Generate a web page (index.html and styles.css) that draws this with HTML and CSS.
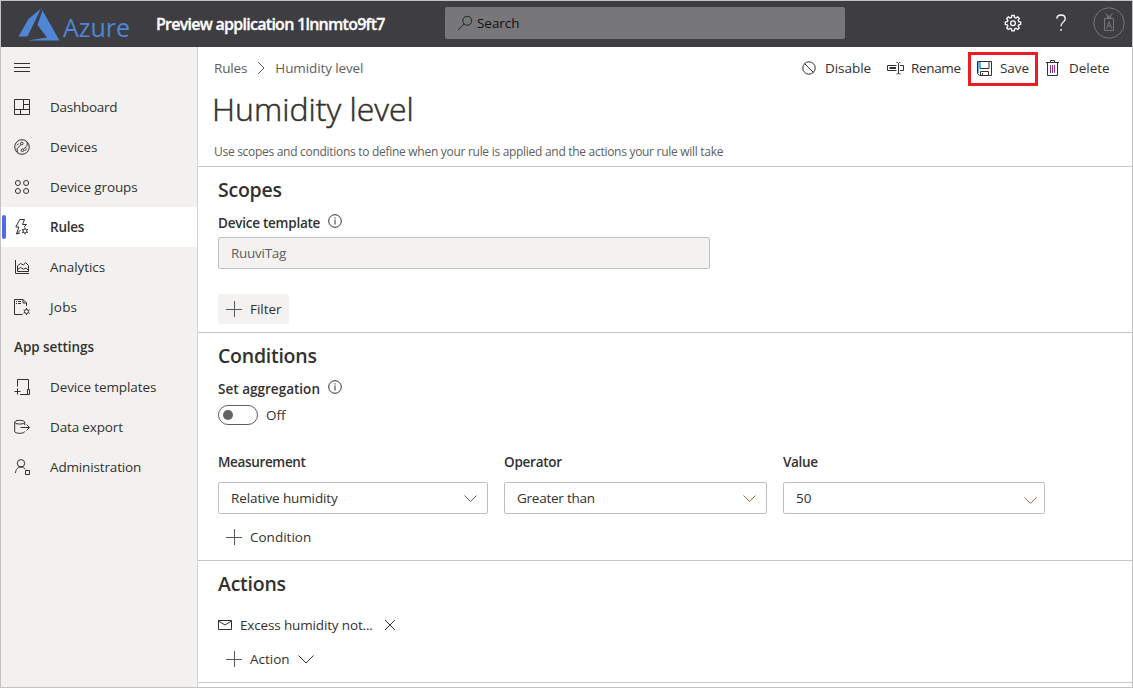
FILE: index.html
```html
<!DOCTYPE html>
<html lang="en">
<head>
<meta charset="utf-8">
<title>Humidity level</title>
<link rel="stylesheet" href="styles.css">
</head>
<body>
<div class="app">
  <header class="topbar">
    <svg class="logo" width="42" height="33" viewBox="0 0 42 33"><path d="M23 .5 10.500 11 .5 28.500H9.500ZM24.500 2.500 41.500 32.500H9.500L29 29.500 19.500 17Z"/></svg>
    <span class="brand">Azure</span>
    <span class="app-name">Preview application 1lnnmto9ft7</span>
    <div class="search">
      <svg class="icon search-icon" width="16" height="16" viewBox="0 0 16 16"><circle cx="10.200" cy="5.800" r="4.500"/><path d="M7 9 1 15"/></svg>
      <span class="t-search">Search</span>
    </div>
    <div class="top-actions">
      <svg class="icon white gear" width="18" height="18" viewBox="0 0 18 18"><path d="M7.800 1.500h2.400l.4 2 1.300.6 1.800-1.200 1.600 1.600-1.200 1.800.6 1.300 2 .4v2.400l-2 .4-.6 1.300 1.200 1.800-1.600 1.600-1.800-1.200-1.300.6-.4 2H7.800l-.4-2-1.300-.6-1.800 1.200-1.600-1.600 1.200-1.800-.6-1.300-2-.4V8l2-.4.6-1.300-1.200-1.800 1.600-1.600 1.800 1.200 1.300-.6Z"/><circle cx="9" cy="9.200" r="2.400"/></svg>
      <svg class="icon white help" width="12" height="18" viewBox="0 0 12 18"><path d="M1.800 4.600C2 2.300 3.700 1 6 1s4.200 1.400 4.200 3.700C10.200 8 6 8.300 6 12.200"/><path d="M6 15v2"/></svg>
      <svg class="avatar" width="32" height="32" viewBox="0 0 32 32"><circle cx="16" cy="16" r="15.200"/><path d="M11.500 11.500h9v12h-9zM12.500 6l3.500 5 3.500-5M13.500 21.500l2.500-7 2.500 7M14.500 19h3M14.500 11.500V9h3v2.500"/></svg>
    </div>
  </header>
  <div class="body">
    <nav class="sidebar">
      <div class="nav-item"><svg class="icon" width="16" height="16" viewBox="0 0 16 16"><path d="M0 4.500h16M0 8.500h16M0 12.500h16"/></svg></div>
      <div class="nav-item"><svg class="icon" width="16" height="16" viewBox="0 0 16 16"><path d="M.5.500h15v15H.5ZM9.500.500v10M.5 10.500h15M9.500 5.500h6M6.500 10.500v5"/></svg><span class="n1">Dashboard</span></div>
      <div class="nav-item"><svg class="icon" width="16" height="16" viewBox="0 0 16 16"><circle cx="8" cy="8" r="7.300"/><circle cx="7.800" cy="4.500" r="1.300"/><circle cx="8.500" cy="11.300" r="1.300"/><path d="M7 5.700 3.200 9.500V13M9.500 10.300 13.200 6.500V3M4.800 4.500 3 6.300M10.500 12 13 9.500"/></svg><span class="n2">Devices</span></div>
      <div class="nav-item"><svg class="icon" width="16" height="16" viewBox="0 0 16 16"><circle cx="3.900" cy="4" r="2.500"/><circle cx="12.100" cy="4" r="2.500"/><circle cx="3.900" cy="12" r="2.500"/><circle cx="12.100" cy="12" r="2.500"/></svg><span class="n3">Device groups</span></div>
      <div class="nav-item active"><svg class="icon" width="16" height="16" viewBox="0 0 16 16"><path d="M8.500 5.500 10.500.5H5.800L1.800 8h3L2.500 15l4-4M8.500 5.500h4L10 8M2.500 15l3.500-1"/><circle cx="11" cy="12" r="2"/><path d="M11 8.500V10M11 14v1.500M8 10.300l1.300.7M12.700 13l1.300.7M8 13.700l1.300-.7M12.700 11l1.300-.7"/></svg><span class="n4">Rules</span></div>
      <div class="nav-item"><svg class="icon" width="16" height="16" viewBox="0 0 16 16"><path d="M1.500 1v13.500H15M3.500 12.500V6.800l3-2.300 3 1.500 2-2.500 3 3v6ZM3.500 10.500l3-2 3 1.700 2.500-1.200 2.500 2.500"/></svg><span class="n5">Analytics</span></div>
      <div class="nav-item"><svg class="icon" width="16" height="16" viewBox="0 0 16 16"><path d="M8.500 15.500H.5V.5h8.500l3.500 3.500v3M9 .5V4h3.500M2 2.500h1M4 2.500h3M2 4.500h1M4 4.500h3"/><circle cx="12.500" cy="12.500" r="2"/><path d="M12.500 9v1.500M12.500 14.500V16M9.500 10.800l1.300.7M14.200 13.500l1.500.8M9.500 14.200l1.300-.7M14.200 11.500l1.500-.8"/></svg><span class="n6">Jobs</span></div>
      <div class="nav-item heading"><span class="n7">App settings</span></div>
      <div class="nav-item"><svg class="icon" width="16" height="16" viewBox="0 0 16 16"><path d="M3.500 7.500v-7h11v10M6 15.500h9.500v-5h-2v5M3.500 9.500v6M.5 12.500h6"/></svg><span class="n8">Device templates</span></div>
      <div class="nav-item"><svg class="icon" width="16" height="16" viewBox="0 0 16 16"><ellipse cx="5.700" cy="3.200" rx="5" ry="1.900"/><path d="M.7 3.200v9.300c0 1 2.200 1.800 5 1.800s5-.8 5-1.800M10.700 3.200V6M6.500 8.500h9M12.500 5.500l3 3-3 3"/></svg><span class="n9">Data export</span></div>
      <div class="nav-item"><svg class="icon" width="16" height="16" viewBox="0 0 16 16"><circle cx="7" cy="4.300" r="3.700"/><path d="M1.500 14c.2-3.500 2.200-6 5.500-6 2 0 3.500.9 4.300 2.300M11.500 11.500h4v4h-4Z"/></svg><span class="n10">Administration</span></div>
    </nav>
    <main class="main">
      <div class="page-head">
        <div class="command-row">
          <div class="crumbs"><span class="c1">Rules</span><svg class="icon grey" width="8" height="14" viewBox="0 0 8 14"><path d="M1 1l6 6-6 6"/></svg><span class="c2">Humidity level</span></div>
          <div class="commands">
            <div class="cmd disable"><svg class="icon" width="14" height="14" viewBox="0 0 14 14"><circle cx="7" cy="7" r="6.200"/><path d="M2.500 2.500l9 9"/></svg><span class="k1">Disable</span></div>
            <div class="cmd rename"><svg class="icon" width="17" height="14" viewBox="0 0 17 14"><path d="M9.500 9.500h-9v-5h9M13 4.500h3.500v5H13M9.500 1.500h1l1 1 1-1h1M11.500 2.500v10M9.500 13h1l1-1 1 1h1"/><path class="thick" d="M2.500 7H9"/></svg><span class="k2">Rename</span></div>
            <div class="cmd save"><svg class="icon" width="15" height="15" viewBox="0 0 15 15"><path d="M.5.500h14v14H2.500l-2-2ZM3 .5v7h9v-7M3.500 14.500v-4h8v4M5.500 12v2.500"/><path class="blue" d="M1.500 1v11.500M3.500 1v6"/></svg><span class="k3">Save</span></div>
            <div class="cmd delete"><svg class="icon" width="13" height="16" viewBox="0 0 13 16"><path d="M0 2.500h13M4.500 2.500v-2h4v2M1.500 2.500v13h10v-13"/><path class="purple" d="M4.500 5v8M6.500 5v8M8.500 5v8"/></svg><span class="k4">Delete</span></div>
          </div>
        </div>
        <h1 class="title">Humidity level</h1>
        <p class="subtitle">Use scopes and conditions to define when your rule is applied and the actions your rule will take</p>
      </div>
      <section class="section scopes">
        <h2 class="h-scopes">Scopes</h2>
        <div class="label-row"><span class="l1">Device template</span><svg class="icon info" width="14" height="14" viewBox="0 0 14 14"><circle cx="7" cy="7" r="6.300"/><path d="M7 5.500v5M7 3.300v1.200"/></svg></div>
        <div class="field disabled"><span class="f1">RuuviTag</span></div>
        <div class="add filter"><svg class="icon plus" width="16" height="16" viewBox="0 0 16 16"><path d="M0 8.500h16M8.500 0v16"/></svg><span class="a1">Filter</span></div>
      </section>
      <section class="section conditions">
        <h2 class="h-conditions">Conditions</h2>
        <div class="label-row"><span class="l2">Set aggregation</span><svg class="icon info" width="14" height="14" viewBox="0 0 14 14"><circle cx="7" cy="7" r="6.300"/><path d="M7 5.500v5M7 3.300v1.200"/></svg></div>
        <div class="toggle-row"><span class="toggle"><i></i></span><span class="off">Off</span></div>
        <div class="fields">
          <div><div class="flabel l3">Measurement</div><div class="field"><span class="f2">Relative humidity</span><svg class="icon chev" width="13" height="7" viewBox="0 0 13 7"><path d="M.5.500l6 6 6-6"/></svg></div></div>
          <div><div class="flabel l4">Operator</div><div class="field"><span class="f3">Greater than</span><svg class="icon chev brown" width="13" height="7" viewBox="0 0 13 7"><path d="M.5.500l6 6 6-6"/></svg></div></div>
          <div><div class="flabel l5">Value</div><div class="field combo"><span class="f4">50</span><svg class="icon chev brown" width="13" height="7" viewBox="0 0 13 7"><path d="M.5.500l6 6 6-6"/></svg></div></div>
        </div>
        <div class="add"><svg class="icon plus" width="16" height="16" viewBox="0 0 16 16"><path d="M0 8.500h16M8.500 0v16"/></svg><span class="a2">Condition</span></div>
      </section>
      <section class="section actions">
        <h2 class="h-actions">Actions</h2>
        <div class="action-row"><svg class="icon" width="14" height="10" viewBox="0 0 14 10"><path d="M.5.500h13v9H.5ZM.5 1l6.500 4 6.500-4"/></svg><span class="e1">Excess humidity not...</span><svg class="icon" width="12" height="12" viewBox="0 0 12 12"><path d="M1 1l10 10M11 1 1 11"/></svg></div>
        <div class="add"><svg class="icon plus" width="16" height="16" viewBox="0 0 16 16"><path d="M0 8.500h16M8.500 0v16"/></svg><span class="a3">Action</span><svg class="icon" width="16" height="9" viewBox="0 0 16 9"><path d="M.5.500 8 8l7.500-7.500"/></svg></div>
      </section>
    </main>
  </div>
</div>
</body>
</html>
```
FILE: styles.css
```css
* { box-sizing: border-box; }
body { margin: 0; font: 13.5px/20px "Open Sans", "Noto Sans", sans-serif; color: #323130; background: #fff; }
h1, h2, p { margin: 0; }
svg { display: block; flex: none; }
span { white-space: nowrap; }
.app { width: 1133px; height: 688px; border: 1px solid #c3c3c3; display: flex; flex-direction: column; overflow: hidden; }
.icon { fill: none; stroke: #323130; stroke-width: 1; }
.grey { stroke: #605e5c; }
.white { stroke: #fff; stroke-width: 1.3; }
.blue { stroke: #6aaeea; }
.purple { stroke: #8a2f8f; }
.plus { stroke: #55585c; }
.thick { stroke-width: 2; }

.topbar { height: 46px; flex: none; background: #3e3d42; display: flex; align-items: center; padding-left: 17px; }
.logo { fill: #4f86d6; }
.brand { color: #4f86d6; font-size: 25px; width: 93px; padding-left: 3px; padding-top: 5px; }
.app-name { color: #fff; font-size: 16px; font-weight: 600; letter-spacing: -.73px; width: 292px; padding-left: 3px; padding-bottom: 1px; -webkit-text-stroke: .3px #fff; }
.search { width: 400px; height: 32px; margin-top: -2px; background: #777678; border-radius: 2px; display: flex; align-items: center; padding-left: 12px; gap: 4px; color: #111; }
.search-icon { stroke: #222; }
.top-actions { display: flex; align-items: center; flex: 1; margin-top: -3px; }
.gear { margin-left: 159px; }
.help { margin-left: 33px; }
.avatar { margin-left: 26px; fill: none; stroke: #767579; stroke-width: 1; }

.body { display: flex; flex: 1; min-height: 0; }
.sidebar { width: 197px; flex: none; background: #f2f1f0; border-right: 1px solid #d5d4d3; }
.nav-item { height: 40px; display: flex; align-items: center; gap: 20px; padding-left: 13px; }
.nav-item.active { background: #fff; font-weight: 600; position: relative; }
.nav-item.active::before { content: ""; position: absolute; left: 1px; top: 8px; width: 4px; height: 24px; border-radius: 2px; background: #4f6bed; }
.heading { font-weight: 600; }

.main { flex: 1; min-width: 0; }
.page-head { height: 120px; border-bottom: 1px solid #c8c8c8; }
.command-row { display: flex; justify-content: space-between; height: 42px; }
.crumbs { display: flex; align-items: center; padding-left: 16px; gap: 10px; color: #605e5c; }
.commands { display: flex; align-items: center; padding-top: 1px; }
.cmd { display: flex; align-items: center; padding-bottom: 1px; }
.disable { gap: 9px; width: 85px; }
.rename { gap: 7px; width: 81px; }
.save { gap: 8px; width: 70px; height: 34px; border: 3px solid #ec1c24; padding-left: 6px; }
.delete { gap: 10px; padding-left: 8px; width: 94px; }
.title { font-weight: 300; font-size: 32px; line-height: 40px; padding-left: 14px; -webkit-text-stroke: .5px #323130; }
.subtitle { font-size: 12px; color: #605e5c; line-height: 16px; padding: 15px 0 0 16px; letter-spacing: -.29px; }

.section { border-bottom: 1px solid #c8c8c8; padding-left: 20px; }
.section h2 { font-size: 19.5px; font-weight: 600; line-height: 28px; letter-spacing: -.25px; }
.scopes { height: 166px; padding-top: 9px; }
.conditions { height: 228px; padding-top: 9px; }
.actions { height: 122px; padding-top: 9px; }
.label-row { display: flex; gap: 8px; margin-top: 9px; height: 24px; font-weight: 600; }
.info { margin-top: 1px; }
.field { height: 32px; border: 1px solid #c0bfbe; border-radius: 2px; display: flex; align-items: center; justify-content: space-between; padding: 0 10px 0 12px; }
.disabled { width: 492px; background: #f3f2f1; color: #605e5c; }
.add { display: flex; align-items: center; gap: 8px; height: 30px; padding-left: 8px; }
.filter { width: 71px; margin-top: 25px; background: #f3f2f1; border-radius: 2px; }
.toggle-row { display: flex; align-items: center; gap: 8px; margin-top: 2px; height: 20px; }
.toggle { width: 40px; height: 20px; border: 1px solid #605e5c; border-radius: 10px; padding: 4px; }
.toggle i { display: block; width: 10px; height: 10px; border-radius: 5px; background: #666463; }
.fields { display: grid; grid-template-columns: 270px 263px 262px; gap: 16px; margin-top: 27px; }
.flabel { font-weight: 600; height: 30px; }
.chev { stroke: #605e8c; }
.brown { stroke: #a5693f; }
.combo { padding-right: 7px; }
.combo .chev { margin-top: 4px; }
.conditions .add { margin-top: 8px; }
.action-row { display: flex; align-items: center; gap: 8px; height: 20px; margin-top: 17px; }
.action-row .icon:last-child { margin-left: 3px; }
.actions .add { margin-top: 9px; }

/* Tracking per label */
.n1, .f1 { letter-spacing: -.27px; }
.n2, .n3, .n8, .f2, .c2 { letter-spacing: -.11px; }
.n4, .f3, .l1, .l4 { letter-spacing: -.24px; }
.n5, .n7, .k3, .k4, .k1, .a1, .t-search { letter-spacing: -.05px; }
.n6 { letter-spacing: .2px; }
.n9, .n10, .c1, .e1 { letter-spacing: -.15px; }
.k2, .l3, .l5 { letter-spacing: -.35px; }
.l2 { letter-spacing: .02px; }
```
